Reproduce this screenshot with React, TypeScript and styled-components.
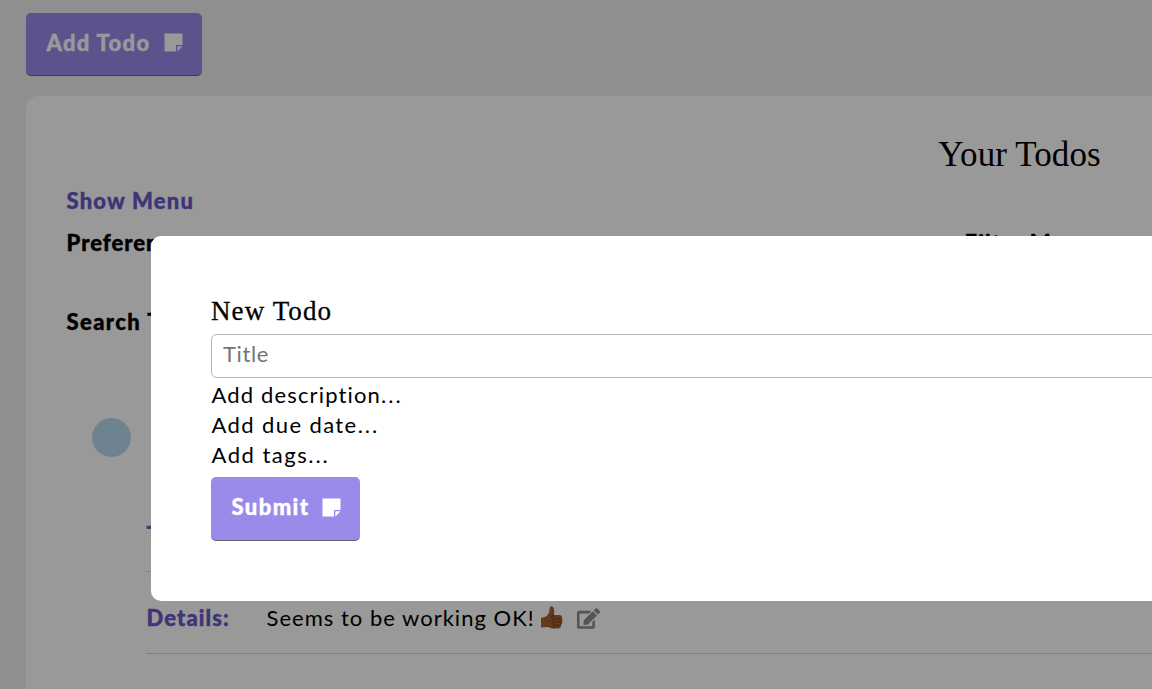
import React from "react";
import styled, { createGlobalStyle } from "styled-components";
import { FaEdit } from "react-icons/fa";

const Global = createGlobalStyle`
  *{box-sizing:border-box}
  html,body{margin:0;height:100%;overflow:hidden}
  body{background:#eee;font-family:Lato,"Liberation Sans",sans-serif;font-size:22px;line-height:30px;color:#000}
`;
const Page = styled.div`
  height: 689px; overflow: hidden; padding: 13px 0 0 26px; white-space: nowrap;
`;
const Label = styled.span<{ $ls?: number; $bold?: boolean }>`
  display: block;
  padding-left: 0.5px;
  letter-spacing: ${(p) => p.$ls ?? 1.2}px;
  font-weight: ${(p) => (p.$bold ? 900 : 400)};
  -webkit-text-stroke: ${(p) => (p.$bold ? "0.4px currentColor" : "0")};
`;
const Button = styled.button<{ $w: number; $h: number }>`
  display: flex; align-items: center; justify-content: space-between;
  width: ${(p) => p.$w}px; height: ${(p) => p.$h}px;
  padding: 0 19px 3px 20px; border: 0; border-bottom: 1px solid #666; border-radius: 5px;
  background: #9a8beb; color: #fff; font: inherit;
`;
const Card = styled.main`
  margin-top: 20px; width: 1987px; height: 700px; padding: 37px 40px 0;
  background: #fff; border-radius: 12px;
`;
const Heading = styled.h1`
  margin: 0; text-align: center; font: 400 35px/44px "Liberation Serif", serif; letter-spacing: 0.1px;
`;
const MenuLink = styled.div`
  margin-top: 9px; color: #6c57c9;
`;
const Options = styled.div`
  display: grid; grid-template-columns: 898px 1fr; margin-top: 12px;
`;
const Search = styled.div`
  margin-top: 49px;
`;
const Dot = styled.div`
  width: 39px; height: 39px; margin: 80.5px 0 0 26px; border-radius: 50%; background: #b9d9f0;
`;
const Row = styled.div<{ $h: number; $top?: number }>`
  display: flex; align-items: center; height: ${(p) => p.$h}px; padding-top: ${(p) => p.$top ?? 0}px;
  margin-left: 80px; border-bottom: 1px solid #d5d5d5;
`;
const Items = styled.div`
  padding-top: 41.5px;
`;
const Term = styled.div`
  width: 120px; color: #6c57c9;
`;
const Thumb = styled.svg`
  margin: 0 14px 0 6px;
`;
const Overlay = styled.div`
  position: fixed; inset: 0; padding: 236px 0 0 151px; overflow: hidden; background: rgba(0, 0, 0, 0.4);
`;
const Modal = styled.section`
  width: 1700px; height: 365px; padding: 60px; background: #fff; border-radius: 10px;
`;
const Title = styled.h2`
  margin: 0 0 8px; font: 400 27px/30px "Liberation Serif", serif; letter-spacing: 1.1px;
  -webkit-text-stroke: 0.3px #000;
`;
const Input = styled.input`
  display: block; width: 1580px; height: 44px; margin-bottom: 2px; padding: 0 11px 5px;
  border: 1px solid #b5b5b5; border-radius: 6px; background: #fff; font: inherit; letter-spacing: .6px;
  &::placeholder { color: #757575; opacity: 1; }
`;
const Submit = styled.div`
  margin-top: 7px;
`;
const Dots = styled.span`
  letter-spacing: 2px;
`;
const Note = () => (
  <svg width="19" height="19" viewBox="0 0 19 19" fill="currentColor">
    <path d="M.5.5h18v11.5H12v6.5H.5z" />
    <path d="M13.3 13.3h5.2l-5.2 5.2z" />
  </svg>
);

export default function App() {
  return (
    <>
      <Global />
      <Page>
        <Button $w={176} $h={63}><Label $bold $ls={1.3}>Add Todo</Label><Note /></Button>
        <Card>
          <Heading>Your Todos</Heading>
          <MenuLink><Label $bold $ls={1.2}>Show Menu</Label></MenuLink>
          <Options><Label $bold $ls={1}>Preferences</Label><Label $bold>Filter Menu</Label></Options>
          <Search><Label $bold $ls={1.4}>Search Todos</Label></Search>
          <Dot />
          <Items>
            <Row $h={74}><Term><Label $bold>Title:</Label></Term></Row>
            <Row $h={82} $top={11}>
              <Term><Label $bold $ls={1.1}>Details:</Label></Term>
              <Label $ls={1.01}>Seems to be working OK!</Label>
              <Thumb width="22" height="24" viewBox="0 0 22 24">
                <path fill="#a5632f" d="M0 12l5-1.5Q9 7 8.500 2.500 9-.5 11.500.5 14 2 13 9h6q2.500.5 2 3.500 1 1.500 0 3.500 .5 2-1 3 .5 3-3 3.500H11L7 21 0 21.500z" />
                <path fill="none" stroke="#70401d" strokeWidth="1" d="M13 9q-2 0-2.500 2.500M13 12.700h8M13 16h8M13 19.200h7M12.500 9.500q-2 2 0 3.200-1.500 2 0 3.300-1 2 .5 3.200-1 2 .5 3" />
              </Thumb>
              <FaEdit size={23} color="#8c8c8c" />
            </Row>
          </Items>
        </Card>
      </Page>
      <Overlay>
        <Modal>
          <Title>New Todo</Title>
          <Input placeholder="Title" />
          <Label $ls={1.15}>Add description<Dots>...</Dots></Label>
          <Label $ls={1.4}>Add due date<Dots>...</Dots></Label>
          <Label $ls={1.5}>Add tags<Dots>...</Dots></Label>
          <Submit><Button $w={149} $h={64}><Label $bold $ls={1.4}>Submit</Label><Note /></Button></Submit>
        </Modal>
      </Overlay>
    </>
  );
}
